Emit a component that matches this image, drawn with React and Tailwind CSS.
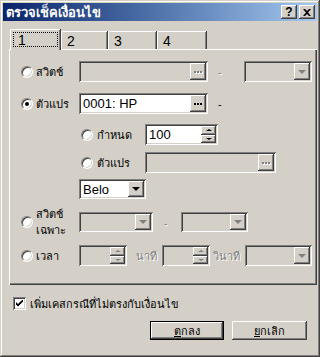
import React from 'react';

const sunken =
  'shadow-[inset_1px_1px_0_#808080,inset_-1px_-1px_0_#ffffff,inset_2px_2px_0_#404040,inset_-2px_-2px_0_#d4d0c8]';
const raised =
  'shadow-[inset_-1px_-1px_0_#404040,inset_1px_1px_0_#ffffff,inset_-2px_-2px_0_#808080,inset_2px_2px_0_#d4d0c8]';

const Radio = ({ checked }) => (
  <span className="relative w-[12px] h-[12px] shrink-0 rounded-full bg-white border border-t-[#808080] border-l-[#808080] border-b-white border-r-white shadow-[inset_1px_1px_0_#404040,inset_-1px_-1px_0_#d4d0c8] flex items-center justify-center">
    {checked && <span className="w-[4px] h-[4px] rounded-full bg-black" />}
  </span>
);

const Dots = ({ disabled }) => (
  <span className="flex gap-[1px]">
    {[0, 1, 2].map((i) => (
      <span
        key={i}
        className={`w-[2px] h-[2px] ${disabled ? 'bg-[#808080] shadow-[1px_1px_0_#ffffff]' : 'bg-black'}`}
      />
    ))}
  </span>
);

const Arrow = ({ disabled, size = 'md' }) => (
  <span
    className={`w-0 h-0 border-l-transparent border-r-transparent ${
      size === 'md'
        ? 'border-l-[4px] border-r-[4px] border-t-[4px]'
        : 'border-l-[3px] border-r-[3px] border-t-[2px]'
    } ${disabled ? 'border-t-[#808080]' : 'border-t-black'}`}
  />
);

const ArrowUp = ({ disabled }) => (
  <span
    className={`w-0 h-0 border-l-[3px] border-r-[3px] border-b-[2px] border-l-transparent border-r-transparent ${
      disabled ? 'border-b-[#808080]' : 'border-b-black'
    }`}
  />
);

const Field = ({ w, value, disabled, button }) => (
  <div className={`${w} h-full flex p-[2px] ${sunken} ${disabled ? 'bg-[#d4d0c8]' : 'bg-white'}`}>
    <span className="flex-1 pl-[2px] flex items-center text-[13px] leading-none text-black font-['Liberation_Sans',sans-serif]">
      {value}
    </span>
    {button === 'dots' && (
      <span className={`w-[16px] h-full flex items-center justify-center bg-[#d4d0c8] ${raised}`}>
        <Dots disabled={disabled} />
      </span>
    )}
    {button === 'drop' && (
      <span className={`w-[16px] h-full flex items-center justify-center bg-[#d4d0c8] ${raised}`}>
        <Arrow disabled={disabled} />
      </span>
    )}
    {button === 'spin' && (
      <span className="w-[15px] h-full flex flex-col">
        <span className={`flex-1 flex items-center justify-center bg-[#d4d0c8] ${raised}`}>
          <ArrowUp disabled={disabled} />
        </span>
        <span className={`flex-1 flex items-center justify-center bg-[#d4d0c8] ${raised}`}>
          <Arrow disabled={disabled} size="sm" />
        </span>
      </span>
    )}
  </div>
);

const Label = ({ w, children, disabled, className = '' }) => (
  <span
    className={`${w} shrink-0 text-[11px] leading-[15px] ${
      disabled ? 'text-[#808080] [text-shadow:1px_1px_0_#ffffff]' : 'text-black'
    } ${className}`}
  >
    {children}
  </span>
);

const App = () => {
  return (
    <div className="w-[320px] h-[357px] bg-[#d4d0c8] p-[3px] flex flex-col font-['Tahoma','Noto_Sans',sans-serif] shadow-[inset_-1px_-1px_0_#404040,inset_1px_1px_0_#d4d0c8,inset_-2px_-2px_0_#808080,inset_2px_2px_0_#ffffff]">
      {/* title bar */}
      <div className="h-[18px] shrink-0 flex items-center justify-between pl-[3px] pr-[2px] bg-gradient-to-r from-[#0a246a] to-[#a6caf0]">
        <span className="text-white font-bold text-[13px] leading-none">ตรวจเช็คเงื่อนไข</span>
        <div className="flex gap-[2px]">
          <span className={`w-[16px] h-[14px] flex items-center justify-center bg-[#d4d0c8] ${raised} text-[12px] font-bold leading-none font-['Liberation_Sans',sans-serif]`}>
            ?
          </span>
          <span className={`w-[16px] h-[14px] flex items-center justify-center bg-[#d4d0c8] ${raised}`}>
            <svg width="8" height="7" viewBox="0 0 8 7">
              <path d="M0 0h2l2 2 2-2h2L5 3.5 8 7H6L4 5 2 7H0l3-3.5z" fill="#000" />
            </svg>
          </span>
        </div>
      </div>

      {/* tabs */}
      <div className="mt-[8px] ml-[7px] h-[20px] flex items-end">
        <div className="relative z-10 w-[50px] h-[21px] -mb-px bg-[#d4d0c8] border-t border-l border-white rounded-tl-[2px] shadow-[inset_-1px_0_0_#808080,1px_0_0_#404040] p-[2px] pt-[2px]">
          <div className="h-[15px] border border-dotted border-black pl-[4px] text-[14px] leading-[14px] font-['Liberation_Sans',sans-serif]">
            1
          </div>
        </div>
        {['2', '3', '4'].map((t, i) => (
          <div
            key={t}
            className={`${i === 0 ? 'w-[46px]' : i === 1 ? 'w-[48px]' : 'w-[49px]'} h-[18px] ml-px bg-[#d4d0c8] border-t border-l border-white rounded-tl-[2px] shadow-[inset_-1px_0_0_#808080,1px_0_0_#404040] pl-[5px] pt-[2px] text-[14px] leading-[14px] font-['Liberation_Sans',sans-serif]`}
          >
            {t}
          </div>
        ))}
      </div>

      {/* panel */}
      <div className="ml-[6px] w-[308px] h-[236px] flex flex-col border-t border-l border-white shadow-[inset_-1px_-1px_0_#404040,inset_-2px_-2px_0_#808080]">
        {/* switch */}
        <div className="mt-[11px] h-[21px] flex items-center pl-[11px]">
          <Radio />
          <Label w="w-[46px]" className="pl-[3px]">สวิตช์</Label>
          <Field w="w-[129px]" disabled button="dots" />
          <Label w="w-[36px]" disabled className="pl-[10px]">-</Label>
          <Field w="w-[68px]" disabled button="drop" />
        </div>
        {/* variable */}
        <div className="mt-[11px] h-[21px] flex items-center pl-[11px]">
          <Radio checked />
          <Label w="w-[46px]" className="pl-[3px]">ตัวแปร</Label>
          <Field w="w-[129px]" value="0001: HP" button="dots" />
          <Label w="w-[36px]" className="pl-[10px]">-</Label>
        </div>
        {/* fixed */}
        <div className="mt-[10px] h-[21px] flex items-center pl-[71px]">
          <Radio />
          <Label w="w-[52px]" className="pl-[4px]">กำหนด</Label>
          <Field w="w-[73px]" value="100" button="spin" />
        </div>
        <div className="mt-[7px] h-[21px] flex items-center pl-[71px]">
          <Radio />
          <Label w="w-[52px]" className="pl-[4px]">ตัวแปร</Label>
          <Field w="w-[131px]" disabled button="dots" />
        </div>
        {/* select */}
        <div className="mt-[6px] h-[20px] flex items-center pl-[69px]">
          <Field w="w-[67px]" value="Belo" button="drop" />
        </div>
        {/* specific switch */}
        <div className="mt-[13px] h-[20px] flex items-center pl-[11px]">
          <Radio />
          <Label w="w-[46px]" className="pl-[3px] leading-[16px]">
            สวิตช์
            <br />
            เฉพาะ
          </Label>
          <Field w="w-[74px]" disabled button="drop" />
          <Label w="w-[28px]" disabled className="pl-[11px]">-</Label>
          <Field w="w-[67px]" disabled button="drop" />
        </div>
        {/* time */}
        <div className="mt-[13px] h-[21px] flex items-center pl-[11px]">
          <Radio />
          <Label w="w-[46px]" className="pl-[3px]">เวลา</Label>
          <Field w="w-[48px]" disabled button="spin" />
          <Label w="w-[35px]" disabled className="pl-[9px]">นาที</Label>
          <Field w="w-[48px]" disabled button="spin" />
          <Label w="w-[35px]" disabled className="pl-[3px]">วินาที</Label>
          <Field w="w-[67px]" disabled button="drop" />
        </div>
      </div>

      {/* checkbox */}
      <div className="mt-[12px] h-[13px] flex items-center pl-[10px]">
        <span className={`w-[13px] h-[13px] shrink-0 bg-white flex items-center justify-center ${sunken}`}>
          <svg width="7" height="7" viewBox="0 0 7 7">
            <path d="M0 2l2 2 5-5v2L2 6 0 4z" fill="#000" />
            <path d="M0 3l2 2 5-5v1.5L2 6.5 0 4.5z" fill="#000" />
          </svg>
        </span>
        <span className="pl-[4px] text-[11px] leading-none">เพิ่มเคสกรณีที่ไม่ตรงกับเงื่อนไข</span>
      </div>

      {/* buttons */}
      <div className="mt-[11px] flex justify-end gap-[8px] pr-[10px]">
        <button className="w-[74px] h-[19px] border border-black bg-[#d4d0c8] shadow-[inset_-1px_-1px_0_#404040,inset_1px_1px_0_#ffffff,inset_-2px_-2px_0_#808080] flex items-center justify-center text-[11px] leading-none">
          <span>
            <span className="underline">ต</span>กลง
          </span>
        </button>
        <button className={`w-[75px] h-[19px] bg-[#d4d0c8] ${raised} flex items-center justify-center text-[11px] leading-none`}>
          <span>
            <span className="underline">ย</span>กเลิก
          </span>
        </button>
      </div>
    </div>
  );
};

export default App;
